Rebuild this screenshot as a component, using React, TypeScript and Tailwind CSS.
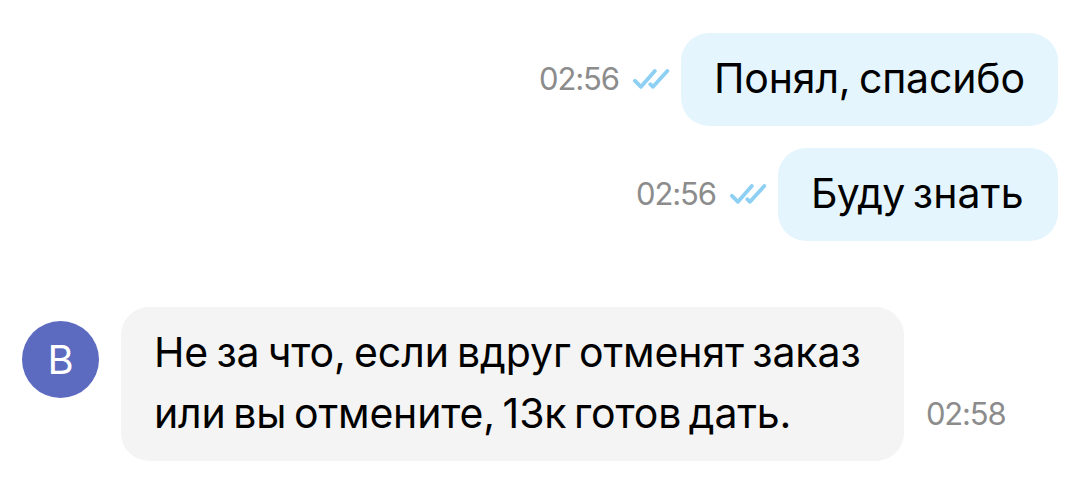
import React from 'react';

function Ticks() {
  return (
    <svg className="block h-[22px] w-[37px] shrink-0" viewBox="0 0 37 22" fill="none" stroke="#8dd0f4" strokeWidth="3.8" strokeLinecap="round" strokeLinejoin="round">
      <path d="M2 11.8 L8 17.8 L21.8 2" />
      <path d="M17.3 15.2 L20 17.8 L34.3 2" />
    </svg>
  );
}

function Sent({ children, bubble }: { children: React.ReactNode; bubble: string }) {
  return (
    <div className="flex h-[93px] items-center justify-end">
      <span className="mr-[14px] text-[31px] tracking-[-1.1px] text-[#8c8c8c]">02:56</span>
      <Ticks />
      <div className={`ml-[11px] flex h-[93px] items-center whitespace-pre rounded-[28px] bg-[#e4f5fe] pb-px pl-[33px] text-[41px] text-black ${bubble}`}>
        <span>{children}</span>
      </div>
    </div>
  );
}

export default function App() {
  return (
    <div className="flex h-[493px] w-[1080px] flex-col overflow-hidden bg-white pl-[22px] pr-[22px] pt-[33px] font-['Inter',sans-serif]">
      <div className="flex flex-col gap-[22px]">
        <Sent bubble="w-[377px] tracking-[-0.15px] [word-spacing:-3px]">Понял, спасибо</Sent>
        <Sent bubble="w-[280px] [word-spacing:-3.5px]">
          <span className="tracking-[-0.7px]">Буду</span> <span className="tracking-[0.2px]">знать</span>
        </Sent>
      </div>
      <div className="mt-[66px] flex">
        <div className="mt-[14px] flex h-[77px] w-[77px] items-center justify-center rounded-full bg-[#5c6bc0] text-[40px] text-white">В</div>
        <div className="ml-[22px] flex h-[154px] w-[783px] flex-col justify-center whitespace-nowrap rounded-[28px] bg-[#f4f4f4] pb-[2px] pl-[33px] text-[41px] leading-[61px] text-black">
          <span className="tracking-[-0.1px] [word-spacing:-3.2px]">Не за что, если вдруг отменят заказ</span>
          <span className="tracking-[-0.16px] [word-spacing:-3.7px]">или вы отмените, 13к готов дать.</span>
        </div>
        <span className="ml-[22px] mt-[84px] text-[31px] leading-[46px] tracking-[-1.2px] text-[#8c8c8c]">02:58</span>
      </div>
    </div>
  );
}
